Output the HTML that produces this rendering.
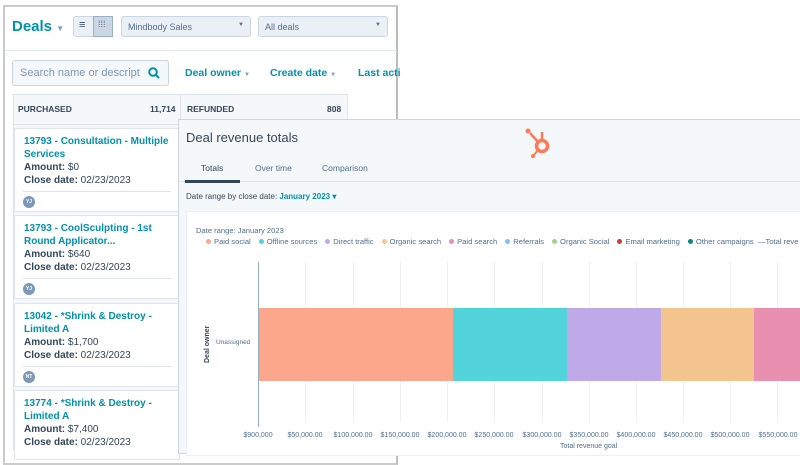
<!DOCTYPE html>
<html><head><style>
*{margin:0;padding:0;box-sizing:border-box}
body{width:800px;height:450px;overflow:hidden;background:#fff;font-family:"Liberation Sans",sans-serif;position:relative;color:#33475b}
.abs{position:absolute}
.frame{left:3px;top:5px;width:395px;height:460px;border:2px solid #cbcbcb;border-right:2px solid #bdbdbd;background:#fff}
.sel{background:#eaf0f6;border:1px solid #cbd6e2;border-radius:3px;font-size:9px;color:#516f90;padding:5px 6px}
.link{color:#0091ae;font-weight:bold;font-size:10.5px}
.card{left:14px;width:166px;background:#fff;border:1px solid #dfe3eb;border-radius:2px}
.card .t{color:#0091ae;font-weight:bold;font-size:10px;line-height:13px;padding:6px 9px 0}
.card .l{font-size:10px;line-height:13px;padding:0 9px;color:#33475b}
.card .l b{font-weight:bold}
.av{width:12px;height:12px;border-radius:50%;background:#7c98b6;color:#fff;font-size:5px;text-align:center;line-height:12px;font-weight:bold}
.leg{font-size:7.6px;color:#516f90;white-space:nowrap}
.dot{display:inline-block;width:5px;height:5px;border-radius:50%;margin:0 3px 0 8px;vertical-align:0}
.tick{font-size:7px;color:#516f90;top:432px;transform:translateX(-50%);white-space:nowrap}
.grid{top:262px;width:1px;height:160px;background:#eef1f4}
</style></head><body>
<div class="abs frame"></div>
<div class="abs" style="left:5px;top:50px;width:392px;height:1px;background:#dfe3eb"></div>
<div class="abs" style="left:12px;top:18px;font-size:15px;font-weight:bold;color:#0091ae">Deals <span style="font-size:8px;color:#7c98b6">▼</span></div>
<div class="abs" style="left:73px;top:16px;width:40px;height:21px;border:1px solid #cbd6e2;border-radius:3px;background:#eaf0f6"></div>
<div class="abs" style="left:93px;top:16px;width:20px;height:21px;background:#cbd6e2;border:1px solid #99afc4"></div>
<div class="abs" style="left:79px;top:19px;font-size:11px;color:#33475b">≡</div>
<div class="abs" style="left:98px;top:19px;font-size:9px;color:#516f90">⁞⁞⁞</div>
<div class="abs sel" style="left:121px;top:16px;width:130px;height:21px">Mindbody Sales<span style="float:right;font-size:6px">▼</span></div>
<div class="abs sel" style="left:258px;top:16px;width:130px;height:21px">All deals<span style="float:right;font-size:6px">▼</span></div>
<div class="abs" style="left:12px;top:60px;width:157px;height:26px;background:#f5f8fa;border:1px solid #cbd6e2;border-radius:3px;font-size:11px;color:#7c98b6;padding:6px 7px;white-space:nowrap;overflow:hidden">Search name or descript</div>
<svg class="abs" style="left:148px;top:67px" width="12" height="12"><circle cx="5" cy="5" r="3.8" stroke="#0091ae" stroke-width="2" fill="none"/><line x1="8" y1="8" x2="11" y2="11" stroke="#0091ae" stroke-width="2"/></svg>
<div class="abs link" style="left:185px;top:67px">Deal owner <span style="font-size:6px;color:#7c98b6">▼</span></div>
<div class="abs link" style="left:270px;top:67px">Create date <span style="font-size:6px;color:#7c98b6">▼</span></div>
<div class="abs link" style="left:358px;top:67px">Last acti</div>
<div class="abs" style="left:13px;top:94px;width:168px;height:356px;background:#f5f8fa;border:1px solid #dfe3eb"></div>
<div class="abs" style="left:180px;top:94px;width:168px;height:356px;background:#f5f8fa;border:1px solid #dfe3eb"></div>
<div class="abs" style="left:18px;top:104px;font-size:8.5px;font-weight:bold">PURCHASED</div>
<div class="abs" style="left:150px;top:104px;font-size:8.5px;font-weight:bold">11,714</div>
<div class="abs" style="left:187px;top:104px;font-size:8.5px;font-weight:bold">REFUNDED</div>
<div class="abs" style="left:327px;top:104px;font-size:8.5px;font-weight:bold">808</div>
<div class="abs" style="left:13px;top:124px;width:335px;height:1px;background:#dfe3eb"></div>

<div class="abs card" style="top:128px;height:84px"><div class="t">13793 - Consultation - Multiple Services</div><div class="l"><b>Amount:</b> $0</div><div class="l"><b>Close date:</b> 02/23/2023</div><div style="margin:4px 8px 0;border-top:1px solid #dfe3eb;padding-top:4px"><div class="av">YJ</div></div></div>
<div class="abs card" style="top:215px;height:84px"><div class="t">13793 - CoolSculpting - 1st Round Applicator...</div><div class="l"><b>Amount:</b> $640</div><div class="l"><b>Close date:</b> 02/23/2023</div><div style="margin:4px 8px 0;border-top:1px solid #dfe3eb;padding-top:4px"><div class="av">YJ</div></div></div>
<div class="abs card" style="top:303px;height:84px"><div class="t">13042 - *Shrink &amp; Destroy - Limited A</div><div class="l"><b>Amount:</b> $1,700</div><div class="l"><b>Close date:</b> 02/23/2023</div><div style="margin:4px 8px 0;border-top:1px solid #dfe3eb;padding-top:4px"><div class="av">NT</div></div></div>
<div class="abs card" style="top:390px;height:70px"><div class="t">13774 - *Shrink &amp; Destroy - Limited A</div><div class="l"><b>Amount:</b> $7,400</div><div class="l"><b>Close date:</b> 02/23/2023</div></div>

<div class="abs" style="left:178px;top:119px;width:625px;height:335px;background:#f5f8fa;border:1px solid #cbd6e2"></div>
<div class="abs" style="left:186px;top:130px;font-size:13px;color:#33475b">Deal revenue totals</div>
<svg class="abs" style="left:522px;top:126px" width="34" height="34" viewBox="0 0 34 34"><circle cx="20" cy="20" r="5.5" stroke="#ff7a59" stroke-width="3.5" fill="none"/><line x1="16" y1="16" x2="8" y2="7" stroke="#ff7a59" stroke-width="2.5"/><circle cx="6" cy="5" r="2.5" fill="#ff7a59"/><line x1="20" y1="14" x2="20" y2="6" stroke="#ff7a59" stroke-width="2.5"/><line x1="16" y1="24" x2="12" y2="29" stroke="#ff7a59" stroke-width="2"/><circle cx="11" cy="30" r="2" fill="#ff7a59"/></svg>
<div class="abs" style="left:201px;top:163px;font-size:8.5px;color:#33475b">Totals</div>
<div class="abs" style="left:255px;top:163px;font-size:8.5px;color:#516f90">Over time</div>
<div class="abs" style="left:322px;top:163px;font-size:8.5px;color:#516f90">Comparison</div>
<div class="abs" style="left:179px;top:181px;width:624px;height:1px;background:#dfe3eb"></div>
<div class="abs" style="left:185px;top:180px;width:55px;height:3px;background:#33475b"></div>
<div class="abs" style="left:186px;top:192px;font-size:8px;color:#33475b">Date range by close date: <b style="color:#0091ae">January 2023 ▾</b></div>
<div class="abs" style="left:186px;top:211px;width:620px;height:245px;background:#fff;border:1px solid #eaf0f6"></div>
<div class="abs leg" style="left:196px;top:226px">Date range: January 2023</div>
<div class="abs leg" style="left:196px;top:237px"><span class="dot" style="background:#fea58e;margin-left:10px"></span>Paid social<span class="dot" style="background:#51d3d9"></span>Offline sources<span class="dot" style="background:#bda9ea"></span>Direct traffic<span class="dot" style="background:#f5c78e"></span>Organic search<span class="dot" style="background:#ea90b1"></span>Paid search<span class="dot" style="background:#81c1fd"></span>Referrals<span class="dot" style="background:#a2d28f"></span>Organic Social<span class="dot" style="background:#c5403a"></span>Email marketing<span class="dot" style="background:#0b8484"></span>Other campaigns &nbsp;—Total reve</div>
<div class="abs grid" style="left:305px"></div><div class="abs grid" style="left:353px"></div><div class="abs grid" style="left:400px"></div><div class="abs grid" style="left:447px"></div><div class="abs grid" style="left:494px"></div><div class="abs grid" style="left:542px"></div><div class="abs grid" style="left:589px"></div><div class="abs grid" style="left:636px"></div><div class="abs grid" style="left:683px"></div><div class="abs grid" style="left:730px"></div><div class="abs grid" style="left:777px"></div>
<div class="abs" style="left:258px;top:262px;width:1px;height:165px;background:#99afc4"></div>
<div class="abs" style="left:259px;top:308px;width:194px;height:73px;background:#fca68c"></div>
<div class="abs" style="left:453px;top:308px;width:114px;height:73px;background:#52d4da"></div>
<div class="abs" style="left:567px;top:308px;width:94px;height:73px;background:#bfa9e9"></div>
<div class="abs" style="left:661px;top:308px;width:93px;height:73px;background:#f4c48e"></div>
<div class="abs" style="left:754px;top:308px;width:50px;height:73px;background:#e990b0"></div>
<div class="abs" style="left:204px;top:363px;font-size:7px;font-weight:bold;transform:rotate(-90deg);transform-origin:left top;white-space:nowrap">Deal owner</div>
<div class="abs" style="left:216px;top:339px;font-size:6.5px;color:#516f90">Unassigned</div>
<div class="abs tick" style="left:258px">$900,000</div><div class="abs tick" style="left:305px">$50,000.00</div><div class="abs tick" style="left:353px">$100,000.00</div><div class="abs tick" style="left:400px">$150,000.00</div><div class="abs tick" style="left:447px">$200,000.00</div><div class="abs tick" style="left:494px">$250,000.00</div><div class="abs tick" style="left:542px">$300,000.00</div><div class="abs tick" style="left:589px">$350,000.00</div><div class="abs tick" style="left:636px">$400,000.00</div><div class="abs tick" style="left:683px">$450,000.00</div><div class="abs tick" style="left:730px">$500,000.00</div><div class="abs tick" style="left:778px">$550,000.00</div>
<div class="abs" style="left:560px;top:443px;font-size:7px;color:#516f90">Total revenue goal</div>
</body></html>
